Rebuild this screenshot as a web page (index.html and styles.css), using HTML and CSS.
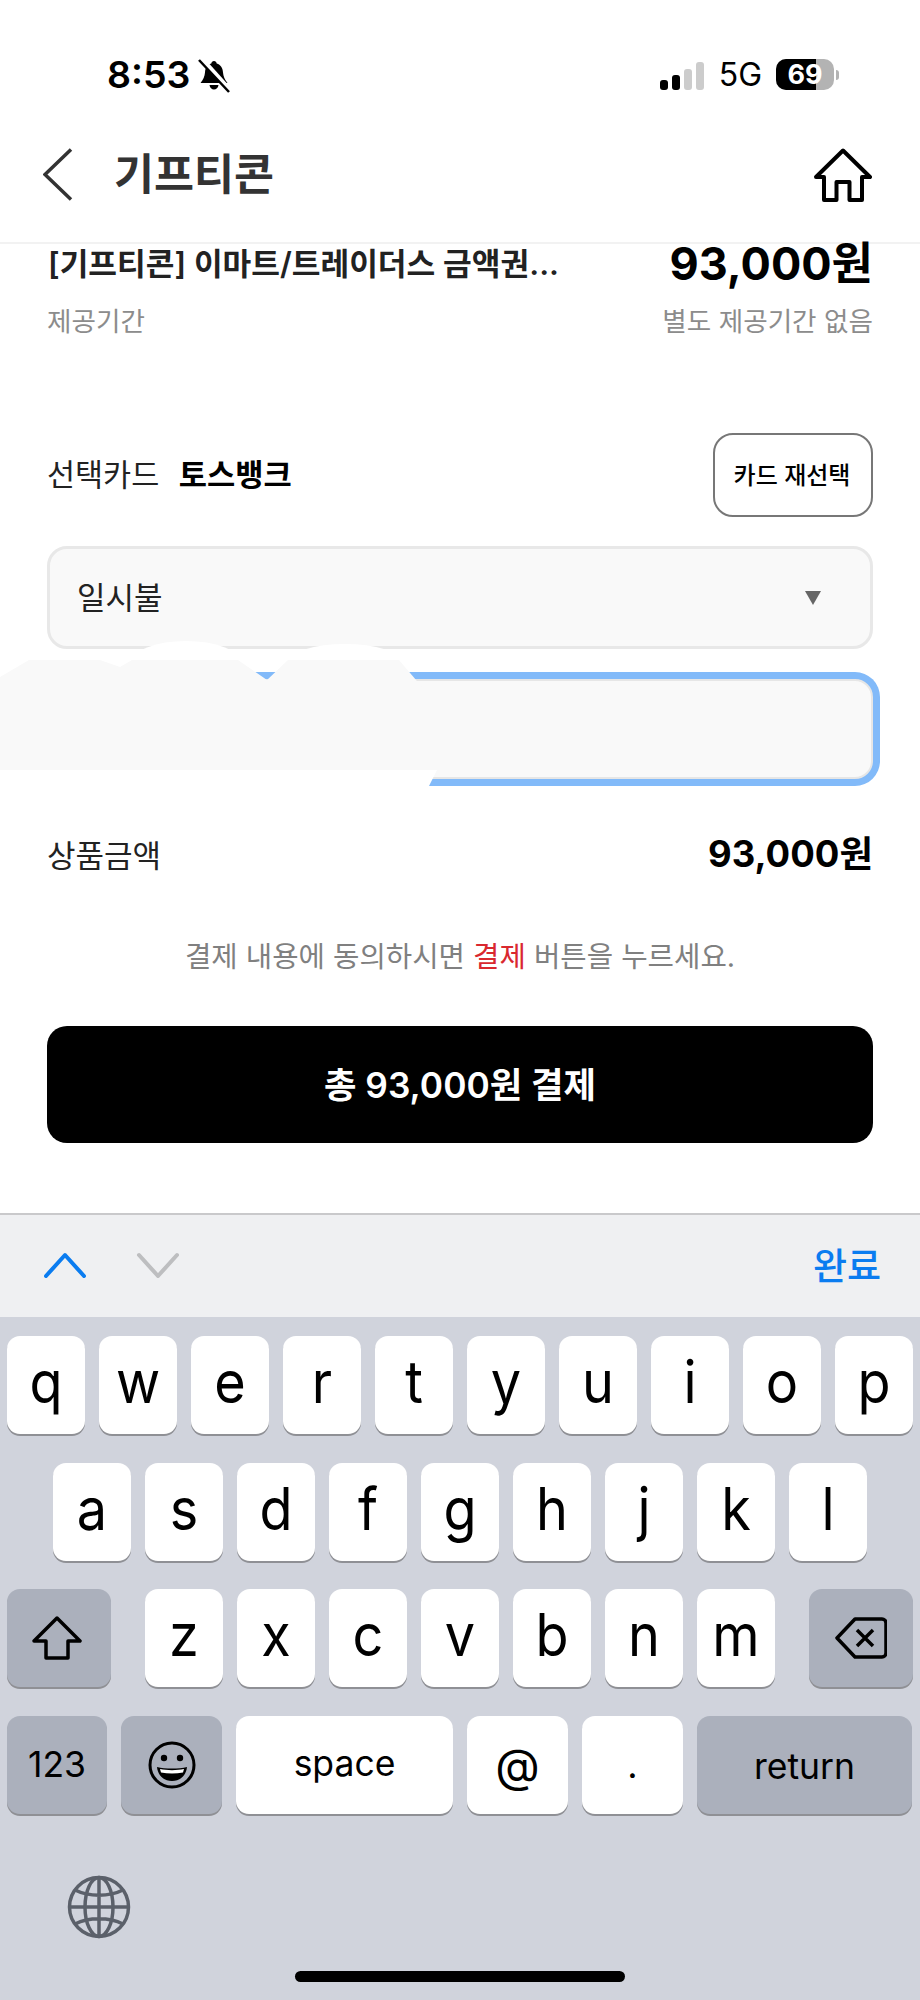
FILE: index.html
```html
<!DOCTYPE html>
<html lang="ko">
<head>
  <meta charset="UTF-8">
  <meta name="viewport" content="width=device-width, initial-scale=1.0">
  <title>기프티콘 결제</title>
  <link rel="stylesheet" href="styles.css">
</head>
<body>
  <div class="page">

    <!-- 상태바 -->
    <div class="status-bar">
      <div class="status-left">
        <span class="clock">8:53</span>
        <svg class="bell" width="32" height="34" viewBox="0 0 32 34">
          <path d="M16 2c1.500 0 2.500 1 2.700 2.500 4 1.200 6 4.500 6.300 9 .3 4 1.800 7 4.500 10.500H2.500C5.200 20.500 6.700 17.500 7 13.500c.3-4.500 2.300-7.800 6.300-9C13.500 3 14.500 2 16 2zM11.500 26h9c-.4 2.800-2.200 4.500-4.500 4.500s-4.100-1.700-4.500-4.500z" fill="#000"/>
          <path d="M4 0l27 30" stroke="#fff" stroke-width="4.500"/>
          <path d="M1 1l30 32" stroke="#000" stroke-width="2.500"/>
        </svg>
      </div>
      <div class="status-right">
        <div class="signal">
          <i class="bar bar-1"></i><i class="bar bar-2"></i><i class="bar bar-3"></i><i class="bar bar-4"></i>
        </div>
        <span class="network">5G</span>
        <div class="battery"><div class="battery-fill"></div><span class="battery-num">69</span></div>
        <i class="battery-tip"></i>
      </div>
    </div>

    <!-- 헤더 -->
    <div class="header">
      <svg class="back-icon" width="30" height="53" viewBox="0 0 30 53">
        <path d="M28 1.500L2 26.500l26 25" fill="none" stroke="#333" stroke-width="3.500"/>
      </svg>
      <h1 class="title">기프티콘</h1>
      <svg class="home-icon" width="60" height="54" viewBox="0 0 60 54">
        <path d="M30 2.500L57 29h-8v23H36.500V34h-13v18H11V29H3z" fill="none" stroke="#000" stroke-width="4" stroke-linejoin="round"/>
      </svg>
    </div>

    <div class="content">
      <div class="item-row">
        <span class="item-name">[기프티콘] 이마트/트레이더스 금액권...</span>
        <span class="item-price">93,000원</span>
      </div>
      <div class="period-row">
        <span>제공기간</span>
        <span>별도 제공기간 없음</span>
      </div>

      <div class="card-row">
        <div class="card-info">
          <span>선택카드</span>
          <strong class="card-name">토스뱅크</strong>
        </div>
        <button class="card-btn">카드 재선택</button>
      </div>

      <div class="select-box">
        <span class="select-text">일시불</span>
        <i class="select-arrow"></i>
      </div>

      <div class="input-box"></div>

      <div class="amount-row">
        <span class="amount-label">상품금액</span>
        <strong class="amount">93,000원</strong>
      </div>

      <p class="notice">결제 내용에 동의하시면 <span class="notice-red">결제</span> 버튼을 누르세요.</p>

      <button class="pay-btn">총 93,000원 결제</button>
    </div>

    <!-- 키보드 툴바 -->
    <div class="toolbar">
      <div class="toolbar-arrows">
        <svg width="44" height="26" viewBox="0 0 44 26">
          <path d="M3 24L22 3l19 21" fill="none" stroke="#0a7cf0" stroke-width="4" stroke-linecap="round" stroke-linejoin="round"/>
        </svg>
        <svg width="44" height="26" viewBox="0 0 44 26">
          <path d="M3 3l19 21L41 3" fill="none" stroke="#bdbec0" stroke-width="4" stroke-linecap="round" stroke-linejoin="round"/>
        </svg>
      </div>
      <span class="done">완료</span>
    </div>

    <!-- 키보드 -->
    <div class="keyboard">
      <div class="key-row">
        <div class="key"><span class="label">q</span></div><div class="key"><span class="label">w</span></div><div class="key"><span class="label">e</span></div><div class="key"><span class="label">r</span></div><div class="key"><span class="label">t</span></div>
        <div class="key"><span class="label">y</span></div><div class="key"><span class="label">u</span></div><div class="key"><span class="label">i</span></div><div class="key"><span class="label">o</span></div><div class="key"><span class="label">p</span></div>
      </div>
      <div class="key-row key-row-center">
        <div class="key"><span class="label">a</span></div><div class="key"><span class="label">s</span></div><div class="key"><span class="label">d</span></div><div class="key"><span class="label">f</span></div><div class="key"><span class="label">g</span></div>
        <div class="key"><span class="label">h</span></div><div class="key"><span class="label">j</span></div><div class="key"><span class="label">k</span></div><div class="key"><span class="label">l</span></div>
      </div>
      <div class="key-row key-row-split">
        <div class="key key-dark key-wide">
          <svg class="shift-icon" width="50" height="44" viewBox="0 0 50 44">
            <path d="M25 2L48 25H36v17H14V25H2z" fill="none" stroke="#000" stroke-width="3.500" stroke-linejoin="round"/>
          </svg>
        </div>
        <div class="key-group">
          <div class="key"><span class="label">z</span></div><div class="key"><span class="label">x</span></div><div class="key"><span class="label">c</span></div><div class="key"><span class="label">v</span></div>
          <div class="key"><span class="label">b</span></div><div class="key"><span class="label">n</span></div><div class="key"><span class="label">m</span></div>
        </div>
        <div class="key key-dark key-wide">
          <svg width="52" height="44" viewBox="0 0 52 44">
            <path d="M2 22L20 3h27a4 4 0 0 1 4 4v30a4 4 0 0 1-4 4H20z" fill="none" stroke="#000" stroke-width="3.500" stroke-linejoin="round"/>
            <path d="M22 14l16 16M38 14L22 30" fill="none" stroke="#000" stroke-width="3.500"/>
          </svg>
        </div>
      </div>
      <div class="key-row key-row-bottom">
        <div class="key key-dark key-small key-123">123</div>
        <div class="key key-dark key-emoji">
          <svg width="48" height="48" viewBox="0 0 48 48">
            <circle cx="24" cy="24" r="22" fill="none" stroke="#000" stroke-width="3"/>
            <circle cx="16" cy="17" r="3.200" fill="#000"/>
            <circle cx="32" cy="17" r="3.200" fill="#000"/>
            <path d="M9 26c8 2 22 2 30 0-1 9-7 14-15 14S10 35 9 26z" fill="#000"/>
            <path d="M12 28c7 1.500 17 1.500 24 0l-1 3.500c-7 1.200-15 1.200-22 0z" fill="#fff"/>
          </svg>
        </div>
        <div class="key key-space"><span class="space-text">space</span></div>
        <div class="key key-at">@</div>
        <div class="key key-dot">.</div>
        <div class="key key-dark key-return"><span class="return-text">return</span></div>
      </div>
      <div class="globe-row">
        <svg width="64" height="64" viewBox="0 0 64 64" fill="none" stroke="#5b606a" stroke-width="3.500">
          <circle cx="32" cy="32" r="29.500"/>
          <ellipse cx="32" cy="32" rx="14" ry="29.500"/>
          <path d="M32 2.500v59M2.500 32h59M8 15c14 7 34 7 48 0M8 49c14-7 34-7 48 0"/>
        </svg>
      </div>
      <div class="home-bar"></div>
    </div>

    <!-- 가림 처리 영역 -->
    <svg class="redact" width="440" height="150" viewBox="0 640 440 150">
      <ellipse cx="186" cy="662" rx="54" ry="21" fill="#fff"/>
      <ellipse cx="345" cy="662" rx="56" ry="18" fill="#fff"/>
      <path d="M0 771V677L29 660H100L120 667L132 660H238L267 680L288 660H399L422 687L437 771z" fill="#f9f9f9"/>
      <path d="M0 770H437L428 788H0z" fill="#fff"/>
    </svg>
  </div>
</body>
</html>
```

FILE: styles.css
```css
* {
  box-sizing: border-box;
}

body {
  margin: 0;
  background-color: #fff;
  font-family: Inter, "Noto Sans CJK KR", sans-serif;
  color: #000;
}

.page {
  position: relative;
  width: 920px;
  height: 2000px;
  display: flex;
  flex-direction: column;
  overflow: hidden;
}

/* 상태바 */
.status-bar {
  height: 112px;
  padding: 56px 81px 0 107px;
  display: flex;
  justify-content: space-between;
  align-items: flex-start;
  flex-shrink: 0;
}

.status-left {
  display: flex;
  align-items: center;
  gap: 8px;
  height: 37px;
}

.clock {
  font-size: 37.5px;
  font-weight: 600;
  line-height: 37px;
}

.bell {
  margin-top: 2px;
}

.status-right {
  display: flex;
  align-items: center;
  height: 37px;
}

.signal {
  display: flex;
  align-items: flex-end;
  gap: 4px;
  height: 28px;
  margin-top: 2px;
}

.bar {
  width: 8px;
  border-radius: 3px;
  background-color: #000;
}

.bar-1 { height: 10px; }
.bar-2 { height: 15px; }
.bar-3 { height: 21px; background-color: #ccc; }
.bar-4 { height: 28px; background-color: #ccc; }

.network {
  margin-left: 15px;
  font-size: 32px;
  font-weight: 400;
  line-height: 37px;
}

.battery {
  position: relative;
  width: 58px;
  height: 31px;
  margin-left: 14px;
  border-radius: 10px;
  background-color: #b3b3b3;
  overflow: hidden;
  text-align: center;
}

.battery-fill {
  position: absolute;
  left: 0;
  top: 0;
  bottom: 0;
  width: 40px;
  background-color: #000;
}

.battery-num {
  position: relative;
  font-size: 27px;
  font-weight: 700;
  line-height: 31px;
  color: #fff;
}

.battery-tip {
  width: 3px;
  height: 10px;
  margin-left: 2px;
  border-radius: 0 3px 3px 0;
  background-color: #b3b3b3;
}

/* 헤더 */
.header {
  height: 132px;
  padding: 36px 47px 0 43px;
  display: flex;
  align-items: flex-start;
  border-bottom: 2px solid #f2f2f2;
  flex-shrink: 0;
}

.back-icon {
  flex-shrink: 0;
}

.title {
  flex: 1;
  margin: 0 0 0 41px;
  font-size: 43.5px;
  font-weight: 700;
  line-height: 52px;
  color: #333;
}

.home-icon {
  flex-shrink: 0;
}

/* 본문 */
.content {
  flex: 1;
  padding: 0 47px;
}

.item-row {
  display: flex;
  justify-content: space-between;
  height: 44px;
  line-height: 40px;
}

.item-name {
  margin-left: 1px;
  font-size: 31.2px;
  font-weight: 600;
  color: #222;
}

.item-price {
  font-size: 45px;
  font-weight: 700;
}

.period-row {
  display: flex;
  justify-content: space-between;
  margin-top: 16px;
  font-size: 26.6px;
  line-height: 34px;
  color: #8c8c8c;
}

.card-row {
  display: flex;
  justify-content: space-between;
  align-items: center;
  margin-top: 95px;
  height: 84px;
}

.card-info {
  margin-top: -6px;
  font-size: 30.5px;
  color: #222;
}

.card-name {
  margin-left: 11px;
  font-size: 30.7px;
  font-weight: 700;
  color: #000;
}

.card-btn {
  width: 160px;
  height: 84px;
  padding: 0 2px 4px 0;
  border: 2px solid #777;
  border-radius: 20px;
  background-color: #fff;
  font-family: inherit;
  font-size: 24px;
  font-weight: 500;
  color: #000;
}

.select-box {
  display: flex;
  justify-content: space-between;
  align-items: center;
  margin-top: 29px;
  height: 103px;
  padding: 0 49px 0 27px;
  border: 3px solid #e8e8e8;
  border-radius: 20px;
  background-color: #f9f9f9;
  font-size: 31px;
  color: #222;
}

.select-text {
  margin-top: -4px;
}

.select-arrow {
  width: 0;
  height: 0;
  border-left: 8px solid transparent;
  border-right: 8px solid transparent;
  border-top: 14px solid #666;
}

.input-box {
  margin-top: 30px;
  height: 100px;
  border: 2px solid #e6e6e6;
  border-radius: 18px;
  background-color: #f9f9f9;
  box-shadow: 0 0 0 7px #82baf9;
}

.amount-row {
  display: flex;
  justify-content: space-between;
  margin-top: 53px;
  height: 44px;
  line-height: 44px;
  font-size: 31px;
  color: #222;
}

.amount-label {
  margin-top: 2px;
}

.amount {
  font-size: 36.5px;
  font-weight: 700;
  color: #000;
}

.notice {
  margin: 61px 0 0;
  font-size: 28.7px;
  line-height: 40px;
  text-align: center;
  color: #808080;
}

.notice-red {
  color: #d9282f;
}

.pay-btn {
  display: block;
  width: 100%;
  height: 117px;
  margin-top: 49px;
  padding: 0 0 4px;
  border: none;
  border-radius: 20px;
  background-color: #000;
  font-family: inherit;
  font-size: 35.3px;
  font-weight: 600;
  color: #fff;
}

/* 툴바 */
.toolbar {
  height: 104px;
  padding: 0 39px 2px 43px;
  display: flex;
  justify-content: space-between;
  align-items: center;
  border-top: 2px solid #c9c9cb;
  background-color: #eff0f2;
  flex-shrink: 0;
}

.toolbar-arrows {
  display: flex;
  gap: 49px;
}

.done {
  margin-bottom: 2px;
  font-size: 37px;
  font-weight: 500;
  color: #0a7cf0;
}

/* 키보드 */
.keyboard {
  height: 683px;
  padding-top: 19px;
  background-color: #d0d3dc;
  flex-shrink: 0;
}

.key-row {
  display: flex;
  gap: 14px;
  height: 100px;
  margin-bottom: 26.67px;
  padding: 0 7px;
}

.key-row-center {
  justify-content: center;
}

.key-row-split {
  justify-content: space-between;
}

.key-group {
  display: flex;
  gap: 14px;
}

.key {
  width: 78px;
  height: 98px;
  display: flex;
  justify-content: center;
  align-items: center;
  border-radius: 13px;
  background-color: #fff;
  box-shadow: 0 2px 0 #8f9095;
  font-size: 50px;
  line-height: 1;
}

/* 스크린샷의 글자가 세로로 약간 길다 */
.label {
  display: block;
  margin-top: -6px;
  font-size: 54px;
  transform: scaleY(1.1);
}

.key-dark {
  background-color: #abb0bc;
}

.key-wide {
  width: 104px;
}

.shift-icon {
  margin-right: 4px;
}

.key-small,
.key-space,
.key-return {
  font-size: 35.5px;
}

.space-text {
  margin-top: -3px;
}

.return-text {
  margin-top: 3px;
}

.key-123 { width: 100px; }
.key-emoji { width: 101px; }
.key-space { width: 217px; }
.key-at { width: 101px; font-size: 46px; }
.key-dot { width: 101px; font-size: 36px; }
.key-return { width: 215px; }

.globe-row {
  margin: 0 0 0 67px;
  padding-top: 32px;
  height: 96px;
}

.home-bar {
  width: 330px;
  height: 11px;
  margin: 32px auto 0;
  border-radius: 6px;
  background-color: #000;
}

/* 가림 */
.redact {
  position: absolute;
  left: 0;
  top: 640px;
}
```
